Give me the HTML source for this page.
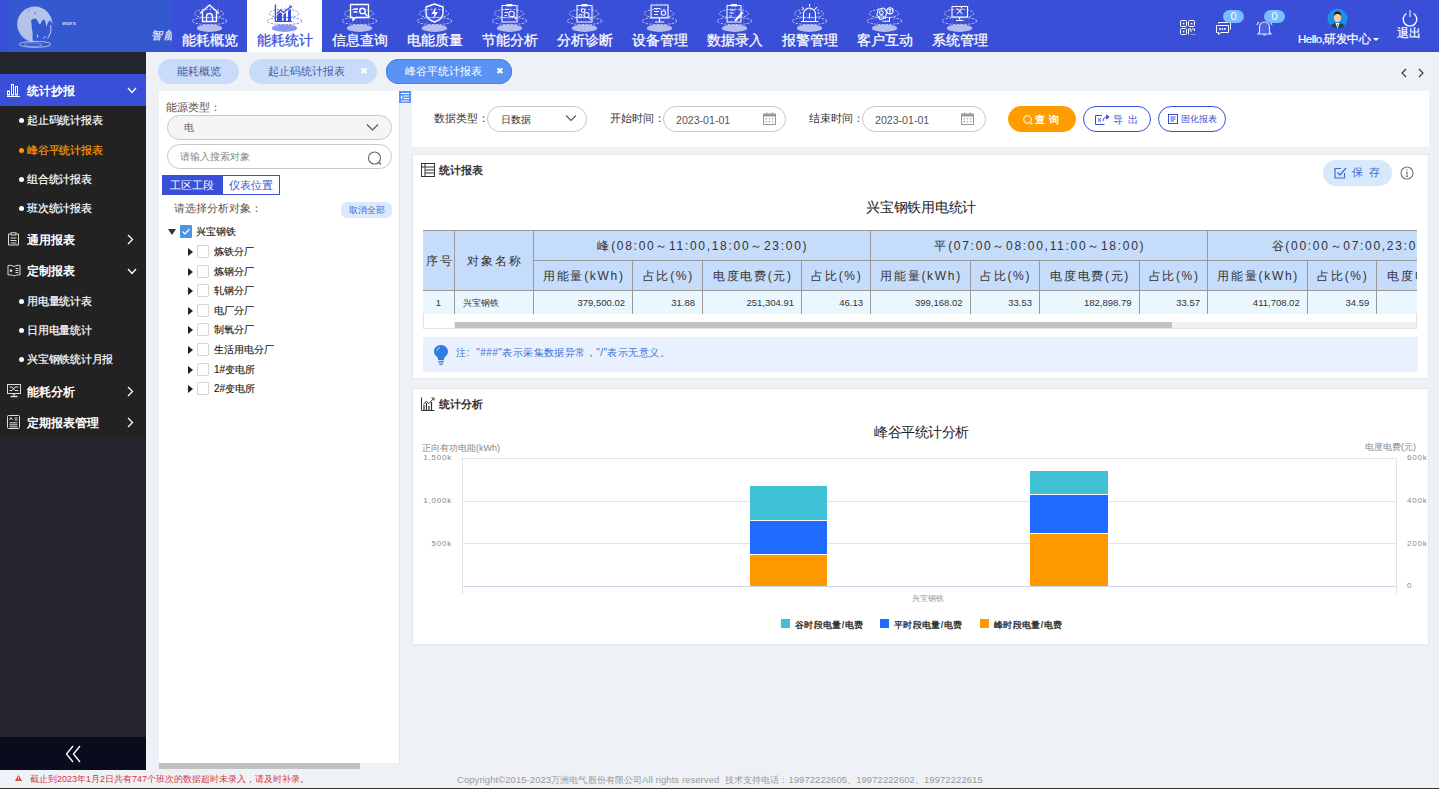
<!DOCTYPE html>
<html><head><meta charset="utf-8">
<style>
*{margin:0;padding:0;box-sizing:border-box}
html,body{width:1439px;height:789px;overflow:hidden;background:#eef2f6;font-family:"Liberation Sans",sans-serif;color:#333}
.a{position:absolute}
#hdr{left:0;top:0;width:1439px;height:52px;background:#3a4fd8}
#logo{left:8px;top:0;width:164px;height:51px;background:#3358d0}
.nav{top:0;width:75px;height:52px;background:#3a4fd8;color:#fff;font-size:14px;text-align:center}
.nav span{position:absolute;left:0;right:0;top:32px;line-height:16px;white-space:nowrap;-webkit-text-stroke:.25px currentColor}
.nav svg{position:absolute;left:16.5px;top:.5px}
.nav.on{background:#fff;color:#3a4fd8}
#side{left:0;top:52px;width:146px;height:718px;background:#23242d}
#menu{left:0;top:74px;width:146px;height:363px;background:#222}
.mi{left:27px;color:#fff;font-size:12px;font-weight:bold;line-height:14px;white-space:nowrap}
.si{left:27px;color:#fff;font-size:11px;letter-spacing:-.25px;line-height:14px;white-space:nowrap;-webkit-text-stroke:.2px currentColor}
.dot{width:5px;height:5px;border-radius:50%;background:#fff}
.panel{background:#fff}
.tab{top:59px;height:25px;border-radius:13px;font-size:11px;line-height:25px;text-align:center;white-space:nowrap}
.tab .x{position:absolute;top:0;font-style:normal;font-size:9px;color:#fff}
.lbl{font-size:10.6px;line-height:13px;color:#555;white-space:nowrap}
.lbl2{font-size:11px;line-height:13px;color:#333;white-space:nowrap}
.sel{border:1px solid #c8c8c8;border-radius:13px}
.sel span{position:absolute;top:0;bottom:0;margin:auto 0;height:14px;font-size:11px;line-height:14px;color:#333;white-space:nowrap}
.tr{font-size:10px;line-height:13px;color:#222;white-space:nowrap;-webkit-text-stroke:.15px #222}
.hd{font-size:11px;line-height:13px;font-weight:bold;color:#333;white-space:nowrap}
.th{font-size:12px;line-height:14px;color:#333;white-space:nowrap}
.td{font-size:9.5px;line-height:12px;color:#333;white-space:nowrap}
.ax{color:#888;line-height:12px;white-space:nowrap}
.yl{font-size:8px;letter-spacing:.8px}
.btn{top:106px;height:26px;border:1px solid #3a4fd8;border-radius:13px;background:#fff}
.bt{top:114px;font-size:10px;line-height:12px;white-space:nowrap}

</style></head><body>
<div id="hdr" class="a"></div>
<div id="logo" class="a"></div>
<svg class="a" style="left:14px;top:3px" width="44" height="47" viewBox="14 3 44 47">
 <circle cx="34.8" cy="24.2" r="17.6" fill="#c3ceec" opacity=".9"/>
 <path d="M31 20.5 C32.5 18.8 35 18.2 36.5 19.2 L38.5 22.5 C39 24.2 40 25 41 23.2 L42 20.8 C43 19.3 44.5 19.3 45 20.8 L46.5 27 C47.3 24.5 48 21.5 50 20.3 L52.8 24.5 C53.2 30 52 36 48 40 C44 42.3 38 42.8 33 41.3 C32 38 33 35 32.5 32 C31.5 28 31.8 24 31 20.5Z" fill="#3358d0"/>
 <path d="M50.5 25 C51.5 29 51 34 47.5 38.5 M45.5 36 L43.5 38.5" fill="none" stroke="#c8d2ef" stroke-width="1"/>
 <path d="M37 35 C37.8 34.5 38.5 35.5 38 37 C37.5 38.5 36.5 38 37 35Z" fill="#c8d2ef"/>
 <path d="M34 13 L35.3 12 L35.8 15Z M28 10 L29.5 9.5 L29 11.5Z" fill="#3358d0" opacity=".7"/>
 <path d="M19 30 C21 35 25 39 30 41.5" fill="none" stroke="#9fb0e0" stroke-width="1.5" opacity=".5"/>
 <ellipse cx="35" cy="44.3" rx="16" ry="3" fill="none" stroke="#c8d2ef" stroke-width="1" opacity=".8"/>
 <ellipse cx="33" cy="44.6" rx="9" ry="1.7" fill="none" stroke="#c8d2ef" stroke-width=".8" opacity=".65"/>
</svg>
<div class="a" style="left:62px;top:20px;font-size:6px;font-weight:bold;color:#d6d3f5;font-style:italic">wors</div>
<div class="a" style="left:151px;top:29px;font-size:11px;line-height:13px;font-weight:bold;font-style:italic;color:#d0d5f0;white-space:nowrap;letter-spacing:2px">智能</div>
<div class="a nav" style="left:172px"><svg width="41" height="32" viewBox="0 0 41 32"><rect x="13" y="2" width="1" height="22" fill="#fff" opacity=".08"/><rect x="17" y="2" width="1" height="22" fill="#fff" opacity=".08"/><rect x="21" y="2" width="1" height="22" fill="#fff" opacity=".08"/><rect x="25" y="2" width="1" height="22" fill="#fff" opacity=".08"/><rect x="29" y="2" width="1" height="22" fill="#fff" opacity=".08"/><ellipse cx="20" cy="12.5" rx="14.7" ry="4.3" fill="none" stroke="#fff" stroke-width="1" stroke-dasharray="2.2 1.5" opacity=".65"/><ellipse cx="20.5" cy="20" rx="17.3" ry="3.7" fill="none" stroke="#fff" stroke-width="1" stroke-dasharray="2.2 1.5" opacity=".65"/><ellipse cx="20.5" cy="27.2" rx="12.7" ry="3.7" fill="rgba(255,255,255,.62)"/><path d="M11 12.5 L20.5 4 L30 12.5" fill="none" stroke="#fff" stroke-width="1.35" stroke-linejoin="round"/><path d="M13.5 11 V20.5 H27.5 V11" fill="none" stroke="#fff" stroke-width="1.35" stroke-linejoin="round"/><path d="M17.5 20.5 V15.5 a3 3 0 0 1 6 0 V20.5" fill="none" stroke="#fff" stroke-width="1.35" stroke-linejoin="round"/></svg><span>能耗概览</span></div>
<div class="a nav on" style="left:247px"><svg width="41" height="32" viewBox="0 0 41 32"><rect x="13" y="2" width="1" height="22" fill="#3a4fd8" opacity=".08"/><rect x="17" y="2" width="1" height="22" fill="#3a4fd8" opacity=".08"/><rect x="21" y="2" width="1" height="22" fill="#3a4fd8" opacity=".08"/><rect x="25" y="2" width="1" height="22" fill="#3a4fd8" opacity=".08"/><rect x="29" y="2" width="1" height="22" fill="#3a4fd8" opacity=".08"/><ellipse cx="20" cy="12.5" rx="14.7" ry="4.3" fill="none" stroke="#3a4fd8" stroke-width="1" stroke-dasharray="2.2 1.5" opacity=".65"/><ellipse cx="20.5" cy="20" rx="17.3" ry="3.7" fill="none" stroke="#3a4fd8" stroke-width="1" stroke-dasharray="2.2 1.5" opacity=".65"/><ellipse cx="20.5" cy="27.2" rx="12.7" ry="3.7" fill="#8797ea"/><path d="M11.4 3.5 V20.3 H28" fill="none" stroke="#3a4fd8" stroke-width="1.35" stroke-linejoin="round"/><path d="M13 20 V14 L16 11 L18 13 V20Z M19.5 20 V13.5 L22 11.5 V20Z M24 20 V10 L27 8 V20Z" fill="#3a4fd8"/><path d="M13 12.5 L16.5 9 L19.5 11.5 L27 5.5" fill="none" stroke="#3a4fd8" stroke-width="1.35" stroke-linejoin="round"/><path d="M25 4.5 L28 4.8 L27.3 7.5Z" fill="#3a4fd8"/></svg><span>能耗统计</span></div>
<div class="a nav" style="left:322px"><svg width="41" height="32" viewBox="0 0 41 32"><rect x="13" y="2" width="1" height="22" fill="#fff" opacity=".08"/><rect x="17" y="2" width="1" height="22" fill="#fff" opacity=".08"/><rect x="21" y="2" width="1" height="22" fill="#fff" opacity=".08"/><rect x="25" y="2" width="1" height="22" fill="#fff" opacity=".08"/><rect x="29" y="2" width="1" height="22" fill="#fff" opacity=".08"/><ellipse cx="20" cy="12.5" rx="14.7" ry="4.3" fill="none" stroke="#fff" stroke-width="1" stroke-dasharray="2.2 1.5" opacity=".65"/><ellipse cx="20.5" cy="20" rx="17.3" ry="3.7" fill="none" stroke="#fff" stroke-width="1" stroke-dasharray="2.2 1.5" opacity=".65"/><ellipse cx="20.5" cy="27.2" rx="12.7" ry="3.7" fill="rgba(255,255,255,.62)"/><path d="M11.5 3.5 H29.5 V16.5 H16.5 L14 19.5 V16.5 H11.5Z" fill="none" stroke="#fff" stroke-width="1.35" stroke-linejoin="round"/><path d="M14.5 8 H19 M14.5 11 H18.5" fill="none" stroke="#fff" stroke-width="1.35" stroke-linejoin="round"/><circle cx="23.5" cy="10" r="2.8" fill="none" stroke="#fff" stroke-width="1.35" stroke-linejoin="round"/><path d="M25.5 12 L28.5 15" fill="none" stroke="#fff" stroke-width="1.35" stroke-linejoin="round"/></svg><span>信息查询</span></div>
<div class="a nav" style="left:397px"><svg width="41" height="32" viewBox="0 0 41 32"><rect x="13" y="2" width="1" height="22" fill="#fff" opacity=".08"/><rect x="17" y="2" width="1" height="22" fill="#fff" opacity=".08"/><rect x="21" y="2" width="1" height="22" fill="#fff" opacity=".08"/><rect x="25" y="2" width="1" height="22" fill="#fff" opacity=".08"/><rect x="29" y="2" width="1" height="22" fill="#fff" opacity=".08"/><ellipse cx="20" cy="12.5" rx="14.7" ry="4.3" fill="none" stroke="#fff" stroke-width="1" stroke-dasharray="2.2 1.5" opacity=".65"/><ellipse cx="20.5" cy="20" rx="17.3" ry="3.7" fill="none" stroke="#fff" stroke-width="1" stroke-dasharray="2.2 1.5" opacity=".65"/><ellipse cx="20.5" cy="27.2" rx="12.7" ry="3.7" fill="rgba(255,255,255,.62)"/><path d="M20.5 3 L29 6 V12 C29 16.5 25 19.5 20.5 21 C16 19.5 12 16.5 12 12 V6Z" fill="none" stroke="#fff" stroke-width="1.35" stroke-linejoin="round"/><path d="M21.5 6.5 L17.5 13 H20.5 L19 18 L24 11 H21Z" fill="#fff"/></svg><span>电能质量</span></div>
<div class="a nav" style="left:472px"><svg width="41" height="32" viewBox="0 0 41 32"><rect x="13" y="2" width="1" height="22" fill="#fff" opacity=".08"/><rect x="17" y="2" width="1" height="22" fill="#fff" opacity=".08"/><rect x="21" y="2" width="1" height="22" fill="#fff" opacity=".08"/><rect x="25" y="2" width="1" height="22" fill="#fff" opacity=".08"/><rect x="29" y="2" width="1" height="22" fill="#fff" opacity=".08"/><ellipse cx="20" cy="12.5" rx="14.7" ry="4.3" fill="none" stroke="#fff" stroke-width="1" stroke-dasharray="2.2 1.5" opacity=".65"/><ellipse cx="20.5" cy="20" rx="17.3" ry="3.7" fill="none" stroke="#fff" stroke-width="1" stroke-dasharray="2.2 1.5" opacity=".65"/><ellipse cx="20.5" cy="27.2" rx="12.7" ry="3.7" fill="rgba(255,255,255,.62)"/><path d="M13 4.5 H28 V21 H13Z" fill="none" stroke="#fff" stroke-width="1.05" stroke-linejoin="round"/><rect x="17.5" y="3" width="6" height="2.4" fill="#fff"/><path d="M15.5 8.5 H20 M15.5 11.5 H19 M15.5 14.5 H18" fill="none" stroke="#fff" stroke-width="1.05" stroke-linejoin="round"/><circle cx="22.5" cy="13" r="2.8" fill="none" stroke="#fff" stroke-width="1.05" stroke-linejoin="round"/><path d="M24.5 15 L27.5 18.5" fill="none" stroke="#fff" stroke-width="1.05" stroke-linejoin="round"/></svg><span>节能分析</span></div>
<div class="a nav" style="left:547px"><svg width="41" height="32" viewBox="0 0 41 32"><rect x="13" y="2" width="1" height="22" fill="#fff" opacity=".08"/><rect x="17" y="2" width="1" height="22" fill="#fff" opacity=".08"/><rect x="21" y="2" width="1" height="22" fill="#fff" opacity=".08"/><rect x="25" y="2" width="1" height="22" fill="#fff" opacity=".08"/><rect x="29" y="2" width="1" height="22" fill="#fff" opacity=".08"/><ellipse cx="20" cy="12.5" rx="14.7" ry="4.3" fill="none" stroke="#fff" stroke-width="1" stroke-dasharray="2.2 1.5" opacity=".65"/><ellipse cx="20.5" cy="20" rx="17.3" ry="3.7" fill="none" stroke="#fff" stroke-width="1" stroke-dasharray="2.2 1.5" opacity=".65"/><ellipse cx="20.5" cy="27.2" rx="12.7" ry="3.7" fill="rgba(255,255,255,.62)"/><path d="M13 4.5 H28 V21 H13Z" fill="none" stroke="#fff" stroke-width="1.05" stroke-linejoin="round"/><rect x="17.5" y="3" width="6" height="2.4" fill="#fff"/><circle cx="19" cy="9.5" r="1.8" fill="none" stroke="#fff" stroke-width="1.05" stroke-linejoin="round"/><circle cx="16.5" cy="15" r="1.6" fill="none" stroke="#fff" stroke-width="1.05" stroke-linejoin="round"/><circle cx="22.5" cy="14" r="2.5" fill="none" stroke="#fff" stroke-width="1.05" stroke-linejoin="round"/><path d="M24.3 16 L27 19" fill="none" stroke="#fff" stroke-width="1.05" stroke-linejoin="round"/></svg><span>分析诊断</span></div>
<div class="a nav" style="left:622px"><svg width="41" height="32" viewBox="0 0 41 32"><rect x="13" y="2" width="1" height="22" fill="#fff" opacity=".08"/><rect x="17" y="2" width="1" height="22" fill="#fff" opacity=".08"/><rect x="21" y="2" width="1" height="22" fill="#fff" opacity=".08"/><rect x="25" y="2" width="1" height="22" fill="#fff" opacity=".08"/><rect x="29" y="2" width="1" height="22" fill="#fff" opacity=".08"/><ellipse cx="20" cy="12.5" rx="14.7" ry="4.3" fill="none" stroke="#fff" stroke-width="1" stroke-dasharray="2.2 1.5" opacity=".65"/><ellipse cx="20.5" cy="20" rx="17.3" ry="3.7" fill="none" stroke="#fff" stroke-width="1" stroke-dasharray="2.2 1.5" opacity=".65"/><ellipse cx="20.5" cy="27.2" rx="12.7" ry="3.7" fill="rgba(255,255,255,.62)"/><path d="M12 4 H29 V17 H12Z" fill="none" stroke="#fff" stroke-width="1.05" stroke-linejoin="round"/><path d="M20.5 17 V20.5 M16 21 H25" fill="none" stroke="#fff" stroke-width="1.05" stroke-linejoin="round"/><path d="M15 7.5 H21 M15 10.5 H20 M15 13.5 H19" fill="none" stroke="#fff" stroke-width="1.05" stroke-linejoin="round"/><circle cx="24.5" cy="12" r="2.2" fill="none" stroke="#fff" stroke-width="1.05" stroke-linejoin="round"/></svg><span>设备管理</span></div>
<div class="a nav" style="left:697px"><svg width="41" height="32" viewBox="0 0 41 32"><rect x="13" y="2" width="1" height="22" fill="#fff" opacity=".08"/><rect x="17" y="2" width="1" height="22" fill="#fff" opacity=".08"/><rect x="21" y="2" width="1" height="22" fill="#fff" opacity=".08"/><rect x="25" y="2" width="1" height="22" fill="#fff" opacity=".08"/><rect x="29" y="2" width="1" height="22" fill="#fff" opacity=".08"/><ellipse cx="20" cy="12.5" rx="14.7" ry="4.3" fill="none" stroke="#fff" stroke-width="1" stroke-dasharray="2.2 1.5" opacity=".65"/><ellipse cx="20.5" cy="20" rx="17.3" ry="3.7" fill="none" stroke="#fff" stroke-width="1" stroke-dasharray="2.2 1.5" opacity=".65"/><ellipse cx="20.5" cy="27.2" rx="12.7" ry="3.7" fill="rgba(255,255,255,.62)"/><path d="M13 4.5 H27 V21 H13Z" fill="none" stroke="#fff" stroke-width="1.05" stroke-linejoin="round"/><rect x="17" y="3" width="6" height="2.4" fill="#fff"/><path d="M15.5 9 H21 M15.5 12 H20 M15.5 15 H18" fill="none" stroke="#fff" stroke-width="1.05" stroke-linejoin="round"/><path d="M21 18.5 L28 10.5 L29.5 12 L22.5 20 L20.5 20.5Z" fill="#fff"/></svg><span>数据录入</span></div>
<div class="a nav" style="left:772px"><svg width="41" height="32" viewBox="0 0 41 32"><rect x="13" y="2" width="1" height="22" fill="#fff" opacity=".08"/><rect x="17" y="2" width="1" height="22" fill="#fff" opacity=".08"/><rect x="21" y="2" width="1" height="22" fill="#fff" opacity=".08"/><rect x="25" y="2" width="1" height="22" fill="#fff" opacity=".08"/><rect x="29" y="2" width="1" height="22" fill="#fff" opacity=".08"/><ellipse cx="20" cy="12.5" rx="14.7" ry="4.3" fill="none" stroke="#fff" stroke-width="1" stroke-dasharray="2.2 1.5" opacity=".65"/><ellipse cx="20.5" cy="20" rx="17.3" ry="3.7" fill="none" stroke="#fff" stroke-width="1" stroke-dasharray="2.2 1.5" opacity=".65"/><ellipse cx="20.5" cy="27.2" rx="12.7" ry="3.7" fill="rgba(255,255,255,.62)"/><path d="M14.5 20 V13 a6 6 0 0 1 12 0 V20" fill="none" stroke="#fff" stroke-width="1.05" stroke-linejoin="round"/><path d="M12 20.5 H29" fill="none" stroke="#fff" stroke-width="1.05" stroke-linejoin="round"/><path d="M20.5 12 V17.5" fill="none" stroke="#fff" stroke-width="1.05" stroke-linejoin="round"/><path d="M20.5 3 V5.5 M13 6 L14.8 7.8 M28 6 L26.2 7.8 M10.5 12 H12.5 M28.5 12 H30.5" fill="none" stroke="#fff" stroke-width="1.05" stroke-linejoin="round"/></svg><span>报警管理</span></div>
<div class="a nav" style="left:847px"><svg width="41" height="32" viewBox="0 0 41 32"><rect x="13" y="2" width="1" height="22" fill="#fff" opacity=".08"/><rect x="17" y="2" width="1" height="22" fill="#fff" opacity=".08"/><rect x="21" y="2" width="1" height="22" fill="#fff" opacity=".08"/><rect x="25" y="2" width="1" height="22" fill="#fff" opacity=".08"/><rect x="29" y="2" width="1" height="22" fill="#fff" opacity=".08"/><ellipse cx="20" cy="12.5" rx="14.7" ry="4.3" fill="none" stroke="#fff" stroke-width="1" stroke-dasharray="2.2 1.5" opacity=".65"/><ellipse cx="20.5" cy="20" rx="17.3" ry="3.7" fill="none" stroke="#fff" stroke-width="1" stroke-dasharray="2.2 1.5" opacity=".65"/><ellipse cx="20.5" cy="27.2" rx="12.7" ry="3.7" fill="rgba(255,255,255,.62)"/><path d="M12.8 13.7 L14.5 8.2 L19.5 7 L22.8 11 L21.3 17 L16.2 18.6Z" fill="none" stroke="#fff" stroke-width="1.05" stroke-linejoin="round"/><circle cx="17.3" cy="11.6" r="1.9" fill="none" stroke="#fff" stroke-width="1.05" stroke-linejoin="round"/><path d="M14.3 16.3 C15 14.3 19.8 14.3 20.5 16.3" fill="none" stroke="#fff" stroke-width="1.05" stroke-linejoin="round"/><circle cx="26" cy="9.8" r="3.1" fill="none" stroke="#fff" stroke-width="1.05" stroke-linejoin="round"/><path d="M25 8.8 C25.5 8 27 8.3 26.8 9.3 C26.6 10 25.5 10 25.3 11 M25 12 H27" fill="none" stroke="#fff" stroke-width="1.05" stroke-linejoin="round"/><path d="M18.5 20.3 H25.5 V16" fill="none" stroke="#fff" stroke-width="1.05" stroke-linejoin="round"/></svg><span>客户互动</span></div>
<div class="a nav" style="left:922px"><svg width="41" height="32" viewBox="0 0 41 32"><rect x="13" y="2" width="1" height="22" fill="#fff" opacity=".08"/><rect x="17" y="2" width="1" height="22" fill="#fff" opacity=".08"/><rect x="21" y="2" width="1" height="22" fill="#fff" opacity=".08"/><rect x="25" y="2" width="1" height="22" fill="#fff" opacity=".08"/><rect x="29" y="2" width="1" height="22" fill="#fff" opacity=".08"/><ellipse cx="20" cy="12.5" rx="14.7" ry="4.3" fill="none" stroke="#fff" stroke-width="1" stroke-dasharray="2.2 1.5" opacity=".65"/><ellipse cx="20.5" cy="20" rx="17.3" ry="3.7" fill="none" stroke="#fff" stroke-width="1" stroke-dasharray="2.2 1.5" opacity=".65"/><ellipse cx="20.5" cy="27.2" rx="12.7" ry="3.7" fill="rgba(255,255,255,.62)"/><path d="M13 5.5 H28.5 V16 H13Z" fill="none" stroke="#fff" stroke-width="1.05" stroke-linejoin="round"/><path d="M20.7 16 V19 M17 19.5 H24.5" fill="none" stroke="#fff" stroke-width="1.05" stroke-linejoin="round"/><path d="M18 7.5 L23.5 13 M23.5 7.5 L18 13" fill="none" stroke="#fff" stroke-width="1.05" stroke-linejoin="round"/><path d="M22.5 5 V7" fill="none" stroke="#fff" stroke-width="1.05" stroke-linejoin="round"/></svg><span>系统管理</span></div>
<!-- right header -->
<svg class="a" style="left:1180px;top:20px" width="16" height="16" viewBox="0 0 16 16" fill="none" stroke="#fff" stroke-width="1">
 <rect x=".5" y=".5" width="6" height="6" rx="1"/><rect x="8.5" y=".5" width="6" height="6" rx="1"/><rect x=".5" y="8.5" width="6" height="6" rx="1"/>
 <rect x="2.8" y="2.8" width="1.6" height="1.6" fill="#fff" stroke="none"/><rect x="10.8" y="2.8" width="1.6" height="1.6" fill="#fff" stroke="none"/><rect x="2.8" y="10.8" width="1.6" height="1.6" fill="#fff" stroke="none"/>
 <path d="M8.5 14.5 V9 H11 V12 M12 9 H14.5 V11"/><rect x="11.5" y="14" width="1" height="1" fill="#fff" stroke="none"/><rect x="13.8" y="14" width="1" height="1" fill="#fff" stroke="none"/>
</svg>
<svg class="a" style="left:1215px;top:20px" width="18" height="16" viewBox="0 0 18 16" fill="none" stroke="#fff" stroke-width="1">
 <path d="M2.5 5.5 H13.5 V12.5 H6 L3.5 14.5 V12.5 H1.5 V5.5Z"/><path d="M3.5 3.5 V2.5 H15.5 V9.5"/>
 <circle cx="5" cy="9" r=".6" fill="#fff"/><circle cx="7.5" cy="9" r=".6" fill="#fff"/><circle cx="10" cy="9" r=".6" fill="#fff"/>
</svg>
<div class="a" style="left:1223px;top:10px;width:21px;height:13px;border-radius:7px;background:#79bcff;color:#fff;font-size:11px;line-height:13px;text-align:center">0</div>
<svg class="a" style="left:1256px;top:20px" width="17" height="16" viewBox="0 0 17 16" fill="none" stroke="#dfe3fb" stroke-width="1.1">
 <path d="M3.5 12.5 V7 a5 5 0 0 1 10 0 V12.5 L15 14 H2 L3.5 12.5Z" fill="rgba(255,255,255,.12)"/><path d="M7 15 H10"/><path d="M1 5 a6 6 0 0 1 2-3 M16 5 a6 6 0 0 0-2-3"/>
</svg>
<div class="a" style="left:1264px;top:10px;width:21px;height:13px;border-radius:7px;background:#79bcff;color:#fff;font-size:11px;line-height:13px;text-align:center">0</div>
<svg class="a" style="left:1327px;top:8px" width="21" height="21" viewBox="0 0 21 21">
 <circle cx="10.5" cy="10.5" r="10" fill="#1e8ee6"/>
 <clipPath id="av"><circle cx="10.5" cy="10.5" r="10"/></clipPath>
 <g clip-path="url(#av)">
 <path d="M2.5 21 C3 16.5 6 15 10.5 15 C15 15 18 16.5 18.5 21Z" fill="#2c3e50"/>
 <path d="M8.5 15 L10.5 21 L12.5 15Z" fill="#fff"/><path d="M10 16 L10.5 21 L11 16Z" fill="#1aa3c9"/>
 <ellipse cx="10.5" cy="9.5" rx="3.6" ry="4.5" fill="#f5cfa0"/>
 <path d="M6.8 8.5 C6.5 5 8.5 3.5 10.5 3.5 C13 3.5 14.5 5 14.2 8.5 C13.5 6.5 12 6 10.5 6 C9 6 7.5 6.5 6.8 8.5Z" fill="#1b1b1b"/>
 </g>
</svg>
<div class="a" style="left:1298px;top:32px;font-size:11.5px;line-height:14px;letter-spacing:-.5px;color:#fff;white-space:nowrap;-webkit-text-stroke:.2px #fff">Hello,研发中心</div>
<div class="a" style="left:1372.5px;top:38px;width:0;height:0;border-left:3.5px solid transparent;border-right:3.5px solid transparent;border-top:3.5px solid #fff"></div>
<svg class="a" style="left:1401px;top:9px" width="18" height="18" viewBox="0 0 18 18" fill="none" stroke="#fff" stroke-width="1.4">
 <path d="M5.5 4.5 A6.8 6.8 0 1 0 12.5 4.5"/><path d="M9 1 V8" stroke="#c9d0f5"/>
</svg>
<div class="a" style="left:1397px;top:26px;font-size:12px;line-height:14px;color:#fff;white-space:nowrap;-webkit-text-stroke:.25px #fff">退出</div>
<div class="a" id="side"></div>
<div class="a" id="menu"></div>
<div class="a" style="left:0;top:74px;width:146px;height:32px;background:#3a4fd8"></div>
<div class="a" style="left:0;top:737px;width:146px;height:33px;background:#0a0b1c"></div>
<svg class="a" style="left:65px;top:745px" width="16" height="18" viewBox="0 0 16 18" fill="none" stroke="#fff" stroke-width="1.3"><path d="M8 1 L1.5 9 L8 17 M15 1 L8.5 9 L15 17"/></svg>
<!-- sidebar menu -->
<svg class="a" style="left:6px;top:83px" width="15" height="14" viewBox="0 0 15 14" fill="none" stroke="#fff" stroke-width="1"><path d="M1 13.5 H14"/><rect x="1.5" y="8" width="2" height="4"/><rect x="5.5" y="1.5" width="2" height="10.5"/><rect x="9.5" y="3.5" width="2" height="8.5"/></svg>
<div class="a mi" style="top:84px">统计抄报</div>
<svg class="a" style="left:127px;top:87px" width="10" height="7" viewBox="0 0 10 7" fill="none" stroke="#fff" stroke-width="1.3"><path d="M1 1 L5 5.5 L9 1"/></svg>
<div class="a dot" style="left:19px;top:118px"></div><div class="a si" style="top:113px">起止码统计报表</div>
<div class="a dot" style="left:19px;top:148px;background:#ff9800"></div><div class="a si" style="top:143px;color:#ff9800">峰谷平统计报表</div>
<div class="a dot" style="left:19px;top:177px"></div><div class="a si" style="top:172px">组合统计报表</div>
<div class="a dot" style="left:19px;top:206px"></div><div class="a si" style="top:201px">班次统计报表</div>
<svg class="a" style="left:7px;top:232px" width="13" height="14" viewBox="0 0 13 14" fill="none" stroke="#ddd" stroke-width="1"><path d="M3.5 2 H1.5 V13 H11.5 V2 H9.5"/><rect x="4" y=".8" width="5" height="2.2"/><path d="M3.5 6 H9.5 M3.5 8.5 H9.5 M3.5 11 H9.5"/></svg>
<div class="a mi" style="top:233px">通用报表</div>
<svg class="a" style="left:127px;top:234px" width="7" height="11" viewBox="0 0 7 11" fill="none" stroke="#fff" stroke-width="1.3"><path d="M1 1 L5.5 5.5 L1 10"/></svg>
<svg class="a" style="left:7px;top:264px" width="14" height="13" viewBox="0 0 14 13" fill="none" stroke="#ddd" stroke-width="1"><path d="M1 1.5 C3 1 5 1.5 7 2.5 C9 1.5 11 1 13 1.5 V11 C11 10.5 9 11 7 12 C5 11 3 10.5 1 11Z"/><path d="M8.5 4.5 H11.5 M8.5 6.5 H11.5 M8.5 8.5 H11.5"/><path d="M4 4.5 L4.6 6 L6 6.1 L4.9 7 L5.3 8.5 L4 7.6 L2.7 8.5 L3.1 7 L2 6.1 L3.4 6Z" fill="#ddd" stroke="none"/></svg>
<div class="a mi" style="top:264px">定制报表</div>
<svg class="a" style="left:127px;top:268px" width="10" height="7" viewBox="0 0 10 7" fill="none" stroke="#fff" stroke-width="1.3"><path d="M1 1 L5 5.5 L9 1"/></svg>
<div class="a dot" style="left:19px;top:299px"></div><div class="a si" style="top:294px">用电量统计表</div>
<div class="a dot" style="left:19px;top:328px"></div><div class="a si" style="top:323px">日用电量统计</div>
<div class="a dot" style="left:19px;top:357px"></div><div class="a si" style="top:352px">兴宝钢铁统计月报</div>
<svg class="a" style="left:7px;top:384px" width="14" height="14" viewBox="0 0 14 14" fill="none" stroke="#ddd" stroke-width="1"><rect x=".5" y=".5" width="13" height="9"/><path d="M2.5 3 H5 L6.5 5 L8 3 H11.5 M2.5 6.5 H5 L6.5 5 L8 6.5 H11.5"/><path d="M7 9.5 V11.5 M3.5 12.5 H10.5" stroke-width="1.5"/></svg>
<div class="a mi" style="top:385px">能耗分析</div>
<svg class="a" style="left:127px;top:386px" width="7" height="11" viewBox="0 0 7 11" fill="none" stroke="#fff" stroke-width="1.3"><path d="M1 1 L5.5 5.5 L1 10"/></svg>
<svg class="a" style="left:7px;top:415px" width="13" height="14" viewBox="0 0 13 14" fill="none" stroke="#ddd" stroke-width="1"><rect x=".5" y=".5" width="12" height="13" rx="1"/><path d="M2.5 5 L4 2.5 L5.5 5 M7.5 3 H10.5 M7.5 5 H10.5 M2.5 7.8 H10.5 M2.5 9.8 H10.5 M2.5 11.8 H10.5"/></svg>
<div class="a mi" style="top:416px">定期报表管理</div>
<svg class="a" style="left:127px;top:417px" width="7" height="11" viewBox="0 0 7 11" fill="none" stroke="#fff" stroke-width="1.3"><path d="M1 1 L5.5 5.5 L1 10"/></svg>
<!-- footer -->
<div class="a" style="left:0;top:770px;width:1439px;height:19px;background:#eef2f6"></div>
<div class="a" style="left:0;top:788px;width:1439px;height:1px;background:#333"></div>
<!-- panels -->
<!-- tabs -->
<div class="a tab" style="left:158px;width:81px;background:#c8dcfa;color:#48589a">能耗概览</div>
<div class="a tab" style="left:249px;width:128px;background:#c8dcfa;color:#48589a;padding-right:13px">起止码统计报表<i class="x" style="left:111px">✖</i></div>
<div class="a tab" style="left:386px;width:126px;background:#5b93f5;color:#fff;padding-right:12px;box-shadow:inset 0 0 0 1px #4a80e0">峰谷平统计报表<i class="x" style="left:110px">✖</i></div>
<svg class="a" style="left:1400px;top:68px" width="8" height="10" viewBox="0 0 8 10" fill="none" stroke="#333" stroke-width="1.1"><path d="M6 1 L2 5 L6 9"/></svg>
<svg class="a" style="left:1417px;top:68px" width="8" height="10" viewBox="0 0 8 10" fill="none" stroke="#333" stroke-width="1.1"><path d="M2 1 L6 5 L2 9"/></svg>
<div class="a panel" style="left:159px;top:91px;width:241px;height:672px;border-right:1px solid #e4e4e4"></div>
<div class="a" style="left:159px;top:763px;width:240px;height:6px;background:#f1f1f1"></div>
<div class="a" style="left:159px;top:763px;width:201px;height:6px;background:#c1c1c1"></div>
<svg class="a" style="left:399px;top:91px" width="12" height="12" viewBox="0 0 12 12"><rect width="12" height="12" fill="#5b93f5"/><path d="M2 2.5 H10 M4.5 5 H10 M4.5 7.5 H10 M2 10 H10" stroke="#fff" stroke-width="1"/><path d="M2 4.3 L4 6.2 L2 8Z" fill="#fff"/></svg>
<!-- left panel content -->
<div class="a lbl" style="left:166px;top:101px">能源类型：</div>
<div class="a sel" style="left:167px;top:115px;width:225px;height:25px;background:#f5f5f5"><span style="left:16px;font-size:10px;color:#555">电</span></div>
<svg class="a" style="left:366px;top:123px" width="13" height="9" viewBox="0 0 13 9" fill="none" stroke="#555" stroke-width="1.1"><path d="M1 1.5 L6.5 7 L12 1.5"/></svg>
<div class="a sel" style="left:167px;top:144px;width:225px;height:25px;background:#fff"><span style="left:12px;color:#888;font-size:10px">请输入搜索对象</span></div>
<svg class="a" style="left:367px;top:151px" width="16" height="15" viewBox="0 0 16 15" fill="none" stroke="#666" stroke-width="1.1"><circle cx="7.5" cy="7" r="6"/><path d="M12 11.5 L14 13.5" stroke-width="1.4"/></svg>
<div class="a" style="left:162px;top:175px;width:60px;height:20px;background:#3a4fd8;color:#fff;font-size:11px;line-height:20px;text-align:center">工区工段</div>
<div class="a" style="left:222px;top:175px;width:58px;height:20px;border:1px solid #3a4fd8;color:#3a4fd8;font-size:11px;line-height:18px;text-align:center">仪表位置</div>
<div class="a lbl" style="left:174px;top:202px">请选择分析对象：</div>
<div class="a" style="left:341px;top:202px;width:51px;height:16px;border-radius:6px;background:#dde8fb;color:#4a6bd6;font-size:9px;line-height:16px;text-align:center">取消全部</div>
<div class="a" style="left:168px;top:229px;width:0;height:0;border-left:4.5px solid transparent;border-right:4.5px solid transparent;border-top:6px solid #333"></div>
<svg class="a" style="left:180px;top:225px" width="12" height="13" viewBox="0 0 12 13"><rect width="12" height="13" rx="1" fill="#4a93e8"/><path d="M2.5 6.5 L5 9 L9.5 4" fill="none" stroke="#fff" stroke-width="1.2"/></svg>
<div class="a tr" style="left:196px;top:225px">兴宝钢铁</div>
<div class="a" style="left:188px;top:248.0px;width:0;height:0;border-top:4.5px solid transparent;border-bottom:4.5px solid transparent;border-left:5px solid #222"></div><div class="a" style="left:197px;top:245.0px;width:12px;height:13px;border:1px solid #d6d6d6;border-radius:1px;background:#fff"></div><div class="a tr" style="left:214px;top:245.0px">炼铁分厂</div>
<div class="a" style="left:188px;top:267.6px;width:0;height:0;border-top:4.5px solid transparent;border-bottom:4.5px solid transparent;border-left:5px solid #222"></div><div class="a" style="left:197px;top:264.6px;width:12px;height:13px;border:1px solid #d6d6d6;border-radius:1px;background:#fff"></div><div class="a tr" style="left:214px;top:264.6px">炼钢分厂</div>
<div class="a" style="left:188px;top:287.2px;width:0;height:0;border-top:4.5px solid transparent;border-bottom:4.5px solid transparent;border-left:5px solid #222"></div><div class="a" style="left:197px;top:284.2px;width:12px;height:13px;border:1px solid #d6d6d6;border-radius:1px;background:#fff"></div><div class="a tr" style="left:214px;top:284.2px">轧钢分厂</div>
<div class="a" style="left:188px;top:306.8px;width:0;height:0;border-top:4.5px solid transparent;border-bottom:4.5px solid transparent;border-left:5px solid #222"></div><div class="a" style="left:197px;top:303.8px;width:12px;height:13px;border:1px solid #d6d6d6;border-radius:1px;background:#fff"></div><div class="a tr" style="left:214px;top:303.8px">电厂分厂</div>
<div class="a" style="left:188px;top:326.4px;width:0;height:0;border-top:4.5px solid transparent;border-bottom:4.5px solid transparent;border-left:5px solid #222"></div><div class="a" style="left:197px;top:323.4px;width:12px;height:13px;border:1px solid #d6d6d6;border-radius:1px;background:#fff"></div><div class="a tr" style="left:214px;top:323.4px">制氧分厂</div>
<div class="a" style="left:188px;top:346.0px;width:0;height:0;border-top:4.5px solid transparent;border-bottom:4.5px solid transparent;border-left:5px solid #222"></div><div class="a" style="left:197px;top:343.0px;width:12px;height:13px;border:1px solid #d6d6d6;border-radius:1px;background:#fff"></div><div class="a tr" style="left:214px;top:343.0px">生活用电分厂</div>
<div class="a" style="left:188px;top:365.6px;width:0;height:0;border-top:4.5px solid transparent;border-bottom:4.5px solid transparent;border-left:5px solid #222"></div><div class="a" style="left:197px;top:362.6px;width:12px;height:13px;border:1px solid #d6d6d6;border-radius:1px;background:#fff"></div><div class="a tr" style="left:214px;top:362.6px">1#变电所</div>
<div class="a" style="left:188px;top:385.2px;width:0;height:0;border-top:4.5px solid transparent;border-bottom:4.5px solid transparent;border-left:5px solid #222"></div><div class="a" style="left:197px;top:382.2px;width:12px;height:13px;border:1px solid #d6d6d6;border-radius:1px;background:#fff"></div><div class="a tr" style="left:214px;top:382.2px">2#变电所</div>
<!-- filter bar -->
<div class="a panel" style="left:412px;top:91px;width:1017px;height:56px"></div>
<div class="a lbl2" style="left:434px;top:112px">数据类型：</div>
<div class="a sel" style="left:487px;top:106px;width:100px;height:26px;background:#fff"><span style="left:13px;top:2px;font-size:10px">日数据</span></div>
<svg class="a" style="left:565px;top:114px" width="12" height="9" viewBox="0 0 12 9" fill="none" stroke="#555" stroke-width="1.1"><path d="M1 1.5 L6 6.5 L11 1.5"/></svg>
<div class="a lbl2" style="left:610px;top:112px">开始时间：</div>
<div class="a sel" style="left:663px;top:106px;width:123px;height:26px;background:#fff"><span style="left:12px;top:1px;color:#555;font-size:10.6px">2023-01-01</span></div>
<svg class="a" style="left:763px;top:112px" width="13" height="13" viewBox="0 0 13 13"><rect x=".5" y="2" width="12" height="10.5" fill="none" stroke="#999"/><rect x=".5" y="2" width="12" height="2.5" fill="#999"/><rect x="3" y="0.5" width="1.2" height="2.5" fill="#999"/><rect x="8.8" y="0.5" width="1.2" height="2.5" fill="#999"/><g fill="#aaa"><rect x="2.5" y="6" width="1.5" height="1.3"/><rect x="5.7" y="6" width="1.5" height="1.3"/><rect x="8.9" y="6" width="1.5" height="1.3"/><rect x="2.5" y="9" width="1.5" height="1.3"/><rect x="5.7" y="9" width="1.5" height="1.3"/><rect x="8.9" y="9" width="1.5" height="1.3"/></g></svg>
<div class="a lbl2" style="left:809px;top:112px">结束时间：</div>
<div class="a sel" style="left:862px;top:106px;width:124px;height:26px;background:#fff"><span style="left:12px;top:1px;color:#555;font-size:10.6px">2023-01-01</span></div>
<svg class="a" style="left:961px;top:112px" width="13" height="13" viewBox="0 0 13 13"><rect x=".5" y="2" width="12" height="10.5" fill="none" stroke="#999"/><rect x=".5" y="2" width="12" height="2.5" fill="#999"/><rect x="3" y="0.5" width="1.2" height="2.5" fill="#999"/><rect x="8.8" y="0.5" width="1.2" height="2.5" fill="#999"/><g fill="#aaa"><rect x="2.5" y="6" width="1.5" height="1.3"/><rect x="5.7" y="6" width="1.5" height="1.3"/><rect x="8.9" y="6" width="1.5" height="1.3"/><rect x="2.5" y="9" width="1.5" height="1.3"/><rect x="5.7" y="9" width="1.5" height="1.3"/><rect x="8.9" y="9" width="1.5" height="1.3"/></g></svg>
<div class="a btn" style="left:1008px;width:68px;background:#ff9c00;border-color:#ff9c00;color:#fff"></div>
<svg class="a" style="left:1023px;top:115px" width="10" height="10" viewBox="0 0 10 10" fill="none" stroke="#fff" stroke-width="1.1"><circle cx="4.5" cy="4.5" r="3.8"/><path d="M7.2 7.2 L9.5 9.5"/></svg>
<div class="a bt" style="left:1035px;color:#fff;font-weight:bold">查</div><div class="a bt" style="left:1049px;color:#fff;font-weight:bold">询</div>
<div class="a btn" style="left:1083px;width:68px"></div>
<svg class="a" style="left:1095px;top:114px" width="15" height="11" viewBox="0 0 15 11" fill="none" stroke="#3a4fd8" stroke-width="1"><path d="M9.5 10.5 H.5 V1.5 H7"/><path d="M3 4 L6 8 M6 4 L3 8" stroke-width=".9"/><path d="M8 7 C8 4 10 3 12.5 3" /><path d="M11.5 1 L14 3 L11.5 5Z" fill="#3a4fd8"/></svg>
<div class="a bt" style="left:1113px;color:#3a4fd8">导</div><div class="a bt" style="left:1128px;color:#3a4fd8">出</div>
<div class="a btn" style="left:1158px;width:68px"></div>
<svg class="a" style="left:1168px;top:114px" width="10" height="10" viewBox="0 0 10 10" fill="none" stroke="#3a4fd8" stroke-width="1"><rect x=".5" y=".5" width="9" height="9"/><path d="M2.5 3 H7.5 M2.5 5 H7.5 M2.5 7 H6"/></svg>
<div class="a" style="left:1181px;top:113px;font-size:9px;line-height:12px;color:#3a4fd8;white-space:nowrap">固化报表</div>
<div class="a panel" style="left:412px;top:154px;width:1017px;height:225px;border:1px solid #e8e8e8"></div>
<div class="a panel" style="left:412px;top:388px;width:1017px;height:257px;border:1px solid #e8e8e8"></div>
<svg class="a" style="left:421px;top:163px" width="14" height="14" viewBox="0 0 14 14" fill="none" stroke="#333" stroke-width="1"><rect x=".5" y=".5" width="13" height="13"/><path d="M4 .5 V13.5 M.5 4 H13.5 M4 7 H13.5 M4 10 H13.5"/></svg>
<div class="a hd" style="left:439px;top:164px">统计报表</div>
<div class="a" style="left:1323px;top:160px;width:69px;height:26px;border-radius:13px;background:#d7e9fb"></div>
<svg class="a" style="left:1334px;top:166px" width="13" height="13" viewBox="0 0 13 13" fill="none" stroke="#3a6fd8" stroke-width="1.2"><path d="M10.5 7 V12 H1 V2.5 H7"/><path d="M3.5 6.5 L6 9 L12 2"/></svg>
<div class="a" style="left:1352px;top:166px;font-size:11px;line-height:13px;color:#3a6fd8;letter-spacing:6px;white-space:nowrap">保存</div>
<svg class="a" style="left:1400px;top:166px" width="14" height="14" viewBox="0 0 14 14" fill="none" stroke="#777" stroke-width="1.1"><circle cx="7" cy="7" r="6"/><path d="M7 6 V10.5 M6 10.5 H8 M6 6 H7"/><circle cx="7" cy="4" r=".7" fill="#777" stroke="none"/></svg>
<div class="a" style="left:866px;top:199px;font-size:14px;letter-spacing:-.25px;line-height:16px;color:#222;white-space:nowrap">兴宝钢铁用电统计</div>
<div class="a" style="left:423px;top:230px;width:994px;height:99px;overflow:hidden">
<div class="a" style="left:0px;top:0px;width:994px;height:60px;background:#c6dcfb"></div>
<div class="a" style="left:0px;top:60px;width:994px;height:24px;background:#eaf7fe"></div>
<div class="a" style="left:0px;top:84px;width:994px;height:15px;background:#fff;border-left:1px solid #e2e2e2;border-bottom:1px solid #e2e2e2;border-right:1px solid #e2e2e2"></div>
<div class="a" style="left:31px;top:92px;width:962px;height:6px;background:#f1f1f1"></div>
<div class="a" style="left:32px;top:92px;width:717px;height:6px;background:#c1c1c1"></div>
<div class="a" style="left:0px;top:0px;width:994px;height:1px;background:#9a9a9a"></div>
<div class="a" style="left:110px;top:30px;width:884px;height:1px;background:#9a9a9a"></div>
<div class="a" style="left:0px;top:60px;width:994px;height:1px;background:#9a9a9a"></div>
<div class="a" style="left:31px;top:0px;width:1px;height:84px;background:#9a9a9a"></div>
<div class="a" style="left:110px;top:0px;width:1px;height:84px;background:#9a9a9a"></div>
<div class="a" style="left:447px;top:0px;width:1px;height:84px;background:#9a9a9a"></div>
<div class="a" style="left:784px;top:0px;width:1px;height:84px;background:#9a9a9a"></div>
<div class="a" style="left:1122.3px;top:0px;width:1px;height:84px;background:#9a9a9a"></div>
<div class="a" style="left:209px;top:30px;width:1px;height:54px;background:#9a9a9a"></div>
<div class="a" style="left:279px;top:30px;width:1px;height:54px;background:#9a9a9a"></div>
<div class="a" style="left:378px;top:30px;width:1px;height:54px;background:#9a9a9a"></div>
<div class="a" style="left:546.5px;top:30px;width:1px;height:54px;background:#9a9a9a"></div>
<div class="a" style="left:616px;top:30px;width:1px;height:54px;background:#9a9a9a"></div>
<div class="a" style="left:715.5px;top:30px;width:1px;height:54px;background:#9a9a9a"></div>
<div class="a" style="left:883.7px;top:30px;width:1px;height:54px;background:#9a9a9a"></div>
<div class="a" style="left:953.3px;top:30px;width:1px;height:54px;background:#9a9a9a"></div>
<div class="a" style="left:1052.7px;top:30px;width:1px;height:54px;background:#9a9a9a"></div>
<div class="a th" style="left:0px;top:24px;width:32px;text-align:center;letter-spacing:1.5px;text-indent:1.5px">序号</div>
<div class="a th" style="left:31px;top:24px;width:80px;text-align:center;letter-spacing:1.7px;text-indent:1.7px">对象名称</div>
<div class="a th" style="left:110px;top:8.5px;width:338px;text-align:center;letter-spacing:1.7px;text-indent:1.7px">峰(08:00～11:00,18:00～23:00)</div>
<div class="a th" style="left:447px;top:8.5px;width:338px;text-align:center;letter-spacing:1.7px;text-indent:1.7px">平(07:00～08:00,11:00～18:00)</div>
<div class="a th" style="left:784px;top:8.5px;width:339.29999999999995px;text-align:center;letter-spacing:1.7px;text-indent:1.7px">谷(00:00～07:00,23:00～24:00)</div>
<div class="a th" style="left:110px;top:38.69999999999999px;width:100px;text-align:center;letter-spacing:1.7px;text-indent:1.7px">用能量(kWh)</div>
<div class="a th" style="left:209px;top:38.69999999999999px;width:71px;text-align:center;letter-spacing:1.7px;text-indent:1.7px">占比(%)</div>
<div class="a th" style="left:279px;top:38.69999999999999px;width:100px;text-align:center;letter-spacing:1.7px;text-indent:1.7px">电度电费(元)</div>
<div class="a th" style="left:378px;top:38.69999999999999px;width:70px;text-align:center;letter-spacing:1.7px;text-indent:1.7px">占比(%)</div>
<div class="a th" style="left:447px;top:38.69999999999999px;width:100.5px;text-align:center;letter-spacing:1.7px;text-indent:1.7px">用能量(kWh)</div>
<div class="a th" style="left:546.5px;top:38.69999999999999px;width:70.5px;text-align:center;letter-spacing:1.7px;text-indent:1.7px">占比(%)</div>
<div class="a th" style="left:616px;top:38.69999999999999px;width:100.5px;text-align:center;letter-spacing:1.7px;text-indent:1.7px">电度电费(元)</div>
<div class="a th" style="left:715.5px;top:38.69999999999999px;width:69.5px;text-align:center;letter-spacing:1.7px;text-indent:1.7px">占比(%)</div>
<div class="a th" style="left:784px;top:38.69999999999999px;width:100.70000000000005px;text-align:center;letter-spacing:1.7px;text-indent:1.7px">用能量(kWh)</div>
<div class="a th" style="left:883.7px;top:38.69999999999999px;width:70.59999999999991px;text-align:center;letter-spacing:1.7px;text-indent:1.7px">占比(%)</div>
<div class="a th" style="left:953.3px;top:38.69999999999999px;width:100.40000000000009px;text-align:center;letter-spacing:1.7px;text-indent:1.7px">电度电费(元)</div>
<div class="a th" style="left:1052.7px;top:38.69999999999999px;width:70.59999999999991px;text-align:center;letter-spacing:1.7px;text-indent:1.7px">占比(%)</div>
<div class="a td" style="left:0;top:67px;width:31px;text-align:center">1</div>
<div class="a td" style="left:40px;top:67px;font-size:9px">兴宝钢铁</div>
<div class="a td" style="left:110px;top:67px;width:92px;text-align:right">379,500.02</div>
<div class="a td" style="left:209px;top:67px;width:63px;text-align:right">31.88</div>
<div class="a td" style="left:279px;top:67px;width:92px;text-align:right">251,304.91</div>
<div class="a td" style="left:378px;top:67px;width:62px;text-align:right">46.13</div>
<div class="a td" style="left:447px;top:67px;width:92.5px;text-align:right">399,168.02</div>
<div class="a td" style="left:546.5px;top:67px;width:62.5px;text-align:right">33.53</div>
<div class="a td" style="left:616px;top:67px;width:92.5px;text-align:right">182,898.79</div>
<div class="a td" style="left:715.5px;top:67px;width:61.5px;text-align:right">33.57</div>
<div class="a td" style="left:784px;top:67px;width:92.70000000000005px;text-align:right">411,708.02</div>
<div class="a td" style="left:883.7px;top:67px;width:62.59999999999991px;text-align:right">34.59</div>
<div class="a td" style="left:953.3px;top:67px;width:92.40000000000009px;text-align:right"></div>
<div class="a td" style="left:1052.7px;top:67px;width:62.59999999999991px;text-align:right"></div>
</div>
<div class="a" style="left:423px;top:337px;width:995px;height:35px;background:#e8f1fd"></div>
<svg class="a" style="left:433px;top:344px" width="16" height="22" viewBox="0 0 16 22"><path d="M8 1 C3.8 1 1 4 1 7.5 C1 10.5 3 12 4.5 13.5 C5 14 5 15 5 16 H11 C11 15 11 14 11.5 13.5 C13 12 15 10.5 15 7.5 C15 4 12.2 1 8 1Z" fill="#2f7de1"/><path d="M5 17.3 H11 M5.5 19 H10.5 M6.5 20.7 H9.5" stroke="#2f7de1" stroke-width="1"/><path d="M4 7 C4 5 5.5 3.8 7 3.6" fill="none" stroke="#fff" stroke-width="1" opacity=".7"/></svg>
<div class="a" style="left:456px;top:346px;font-size:10px;letter-spacing:.45px;line-height:13px;color:#3a6fd8;white-space:nowrap">注:&nbsp; "###"表示采集数据异常，"/"表示无意义。</div>
<svg class="a" style="left:421px;top:397px" width="14" height="14" viewBox="0 0 14 14" fill="none" stroke="#333" stroke-width="1"><path d="M.5 .5 V13.5 H13.5"/><path d="M3 13 V8 M5.5 13 V6 M8 13 V9 M10.5 13 V5" stroke-width="1.2"/><path d="M2.5 7 L5.5 4.5 L8 6.5 L12.5 1.5"/><path d="M10.5 1 H13 V3.5" /></svg>
<div class="a hd" style="left:439px;top:398px">统计分析</div>
<div class="a" style="left:874px;top:423.5px;font-size:14px;letter-spacing:-.45px;line-height:16px;color:#222;white-space:nowrap">峰谷平统计分析</div>
<div class="a ax" style="left:422px;top:441.5px;font-size:9px">正向有功电能(kWh)</div>
<div class="a ax" style="left:1365px;top:441px;font-size:9px">电度电费(元)</div>
<div class="a" style="left:462px;top:458px;width:934px;height:1px;background:#e3e3e3"></div>
<div class="a" style="left:462px;top:501px;width:934px;height:1px;background:#e3e3e3"></div>
<div class="a" style="left:462px;top:543px;width:934px;height:1px;background:#e3e3e3"></div>
<div class="a" style="left:462px;top:586px;width:934px;height:1px;background:#ccd6eb"></div>
<div class="a" style="left:462px;top:458px;width:1px;height:136px;background:#e3e3e3"></div>
<div class="a" style="left:1396px;top:458px;width:1px;height:136px;background:#e3e3e3"></div>
<div class="a ax yl" style="left:400px;top:452px;width:52px;text-align:right">1,500k</div>
<div class="a ax yl" style="left:400px;top:495px;width:52px;text-align:right">1,000k</div>
<div class="a ax yl" style="left:400px;top:538px;width:52px;text-align:right">500k</div>
<div class="a ax yl" style="left:1407px;top:452px">600k</div>
<div class="a ax yl" style="left:1407px;top:495px">400k</div>
<div class="a ax yl" style="left:1407px;top:538px">200k</div>
<div class="a ax yl" style="left:1407px;top:580px">0</div>
<div class="a ax" style="left:912px;top:593px;font-size:8px;color:#999">兴宝钢铁</div>
<div class="a" style="left:750px;top:486px;width:77px;height:34px;background:#40c2d6"></div>
<div class="a" style="left:750px;top:521px;width:77px;height:33px;background:#1f6bff"></div>
<div class="a" style="left:750px;top:555px;width:77px;height:31px;background:#ff9900"></div>
<div class="a" style="left:1030px;top:471px;width:78px;height:23px;background:#40c2d6"></div>
<div class="a" style="left:1030px;top:495px;width:78px;height:38px;background:#1f6bff"></div>
<div class="a" style="left:1030px;top:534px;width:78px;height:52px;background:#ff9900"></div>
<div class="a" style="left:781px;top:618.5px;width:9px;height:9.5px;background:#40c2d6"></div>
<div class="a" style="left:795px;top:619px;font-size:9px;letter-spacing:.35px;line-height:12px;font-weight:bold;color:#333;white-space:nowrap">谷时段电量/电费</div>
<div class="a" style="left:880px;top:618.5px;width:9px;height:9.5px;background:#1f6bff"></div>
<div class="a" style="left:894px;top:619px;font-size:9px;letter-spacing:.35px;line-height:12px;font-weight:bold;color:#333;white-space:nowrap">平时段电量/电费</div>
<div class="a" style="left:980px;top:618.5px;width:9px;height:9.5px;background:#ff9900"></div>
<div class="a" style="left:994px;top:619px;font-size:9px;letter-spacing:.35px;line-height:12px;font-weight:bold;color:#333;white-space:nowrap">峰时段电量/电费</div>
<svg class="a" style="left:15px;top:775px" width="7" height="6" viewBox="0 0 7 6"><path d="M3.5 0 L7 6 H0Z" fill="#e53935"/><path d="M3.5 2 V4.2 M3.5 4.8 V5.4" stroke="#fff" stroke-width=".8"/></svg>
<div class="a" style="left:30px;top:773px;font-size:9px;line-height:12px;color:#d93636;white-space:nowrap">截止到2023年1月2日共有747个班次的数据超时未录入，请及时补录。</div>
<div class="a" style="left:457px;top:774px;font-size:9.45px;letter-spacing:.09px;line-height:12px;color:#999;white-space:nowrap">Copyright©2015-2023万洲电气股份有限公司All rights reserved&nbsp; 技术支持电话：19972222605、19972222602、19972222615</div>
</body></html>
